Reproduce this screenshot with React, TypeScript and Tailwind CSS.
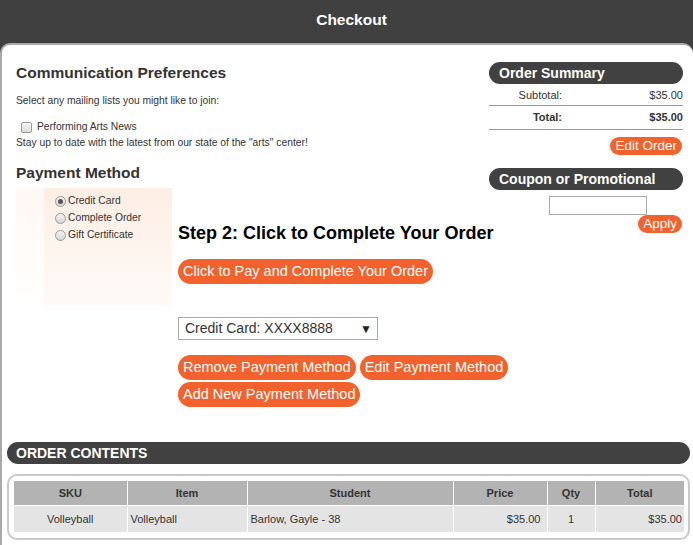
import React from 'react';

function OrangeButton({ children, className = '' }: { children: React.ReactNode; className?: string }) {
  return (
    <button className={`bg-[#f3622d] text-white rounded-full px-[5px] whitespace-nowrap flex items-center ${className}`}>
      {children}
    </button>
  );
}

function Pill({ children }: { children: React.ReactNode }) {
  return (
    <div className="h-[22px] bg-[#414141] rounded-full pl-[10px] flex items-center text-white font-bold text-[14px] whitespace-nowrap">
      {children}
    </div>
  );
}

function Radio({ checked, label }: { checked?: boolean; label: string }) {
  return (
    <div className="flex items-center h-[17px]">
      <span className="w-[11px] h-[11px] rounded-full border border-[#9a9a9a] bg-gradient-to-b from-[#f4f4f4] to-[#d6d6d6] flex items-center justify-center mr-[2px] mt-[2px]">
        {checked && <span className="w-[5px] h-[5px] rounded-full bg-[#555]" />}
      </span>
      <span>{label}</span>
    </div>
  );
}

export default function App() {
  return (
    <div className="w-[693px] h-[545px] overflow-hidden bg-[#404040] font-['Liberation_Sans',Arial,sans-serif] text-[#333]">
      <div className="h-[43px] flex items-center justify-center text-white font-bold text-[15.5px] pb-[4px] pl-[10px]">
        Checkout
      </div>

      <div className="bg-white border-l-2 border-t-2 border-[#a9a9a9] rounded-t-[10px] h-[502px]">
        <div className="flex">
          {/* left column */}
          <div className="w-[487px] shrink-0 pl-[14px]">
            <h2 className="mt-[19px] text-[15.5px] leading-[18px] font-bold">Communication Preferences</h2>
            <p className="mt-[12px] text-[10.3px] leading-[13px]">Select any mailing lists you might like to join:</p>
            <label className="mt-[13px] flex items-center h-[14px] text-[10.3px] pl-[5px]">
              <span className="w-[11px] h-[11px] border border-[#9a9a9a] rounded-[2px] bg-gradient-to-b from-[#f6f6f6] to-[#dcdcdc] mr-[5px]" />
              Performing Arts News
            </label>
            <p className="mt-[2px] text-[10.3px] leading-[13px]">Stay up to date with the latest from our state of the "arts" center!</p>

            <h2 className="mt-[15px] text-[15.5px] leading-[18px] font-bold">Payment Method</h2>

            <div className="mt-[6px] flex">
              <div className="w-[156px] h-[117px] shrink-0 bg-gradient-to-b from-[#fff8f3] to-white flex justify-end">
                <div className="w-[128px] h-full bg-gradient-to-b from-[#fdeee4] to-[#fffaf7] pt-[4px] pl-[11px] text-[10.3px]">
                  <Radio checked label="Credit Card" />
                  <Radio label="Complete Order" />
                  <Radio label="Gift Certificate" />
                </div>
              </div>

              <div className="ml-[6px] pt-[35px]">
                <h3 className="text-[18px] leading-[20px] font-bold text-black whitespace-nowrap">
                  Step 2: Click to Complete Your Order
                </h3>
                <div className="mt-[16px] flex">
                  <OrangeButton className="h-[25px] text-[14.5px]">Click to Pay and Complete Your Order</OrangeButton>
                </div>

                <div className="mt-[33px] w-[200px] h-[23px] border border-[#aaa] flex items-center justify-between pl-[6px] pr-[5px] text-[14px]">
                  <span>Credit Card: XXXX8888</span>
                  <span className="text-[12px] text-[#222]">▼</span>
                </div>

                <div className="mt-[15px] flex gap-[4px]">
                  <OrangeButton className="h-[25px] text-[14.5px]">Remove Payment Method</OrangeButton>
                  <OrangeButton className="h-[25px] text-[14.5px]">Edit Payment Method</OrangeButton>
                </div>
                <div className="mt-[2px] flex">
                  <OrangeButton className="h-[25px] text-[14.5px]">Add New Payment Method</OrangeButton>
                </div>
              </div>
            </div>
          </div>

          {/* right column */}
          <div className="w-[194px] mr-[10px] pt-[17px] shrink-0">
            <Pill>Order Summary</Pill>
            <div className="flex items-center h-[21px] text-[11px] border-b border-[#999] mt-[1px]">
              <span className="w-[73px] text-right">Subtotal:</span>
              <span className="flex-1 text-right">$35.00</span>
            </div>
            <div className="flex items-center h-[24px] text-[11px] font-bold border-b border-[#999]">
              <span className="w-[73px] text-right">Total:</span>
              <span className="flex-1 text-right">$35.00</span>
            </div>
            <div className="flex justify-end mt-[7px] pr-[1px]">
              <OrangeButton className="h-[18px] text-[13.5px] px-[4px]">Edit Order</OrangeButton>
            </div>
            <div className="mt-[13px]">
              <Pill>Coupon or Promotional</Pill>
            </div>
            <div className="flex justify-end mt-[6px] pr-[36px]">
              <input className="w-[98px] h-[19px] border border-[#aaa] outline-none" />
            </div>
            <div className="flex justify-end pr-[1px]">
              <OrangeButton className="h-[18px] text-[13.5px] px-[4px]">Apply</OrangeButton>
            </div>
          </div>
        </div>

        {/* order contents */}
        <div className="mt-[35px] ml-[5px] mr-[3px]">
          <div className="h-[22px] bg-[#414141] rounded-full pl-[9px] flex items-center text-white font-bold text-[14px]">
            ORDER CONTENTS
          </div>
          <div className="mt-[10px] border-2 border-[#c9c9c9] rounded-[10px] pt-[5px] pl-[5px] pr-[4px] pb-[6px]">
            <table className="w-full border-collapse text-[11px] table-fixed">
              <colgroup>
                <col className="w-[113px]" />
                <col className="w-[120px]" />
                <col className="w-[206px]" />
                <col className="w-[94px]" />
                <col className="w-[48px]" />
                <col className="w-[89px]" />
              </colgroup>
              <thead>
                <tr className="bg-[#b3b3b3] h-[24px] font-bold">
                  <th className="border border-white border-t-0 border-l-0">SKU</th>
                  <th className="border border-white border-t-0">Item</th>
                  <th className="border border-white border-t-0">Student</th>
                  <th className="border border-white border-t-0">Price</th>
                  <th className="border border-white border-t-0">Qty</th>
                  <th className="border border-white border-t-0 border-r-0">Total</th>
                </tr>
              </thead>
              <tbody>
                <tr className="bg-[#e4e4e4] h-[27px]">
                  <td className="border border-white border-l-0 border-b-0 text-center">Volleyball</td>
                  <td className="border border-white border-b-0 px-[3px]">Volleyball</td>
                  <td className="border border-white border-b-0 px-[3px]">Barlow, Gayle - 38</td>
                  <td className="border border-white border-b-0 text-right px-[6px]">$35.00</td>
                  <td className="border border-white border-b-0 text-center">1</td>
                  <td className="border border-white border-b-0 border-r-0 text-right px-[2px]">$35.00</td>
                </tr>
              </tbody>
            </table>
          </div>
        </div>
      </div>
    </div>
  );
}
